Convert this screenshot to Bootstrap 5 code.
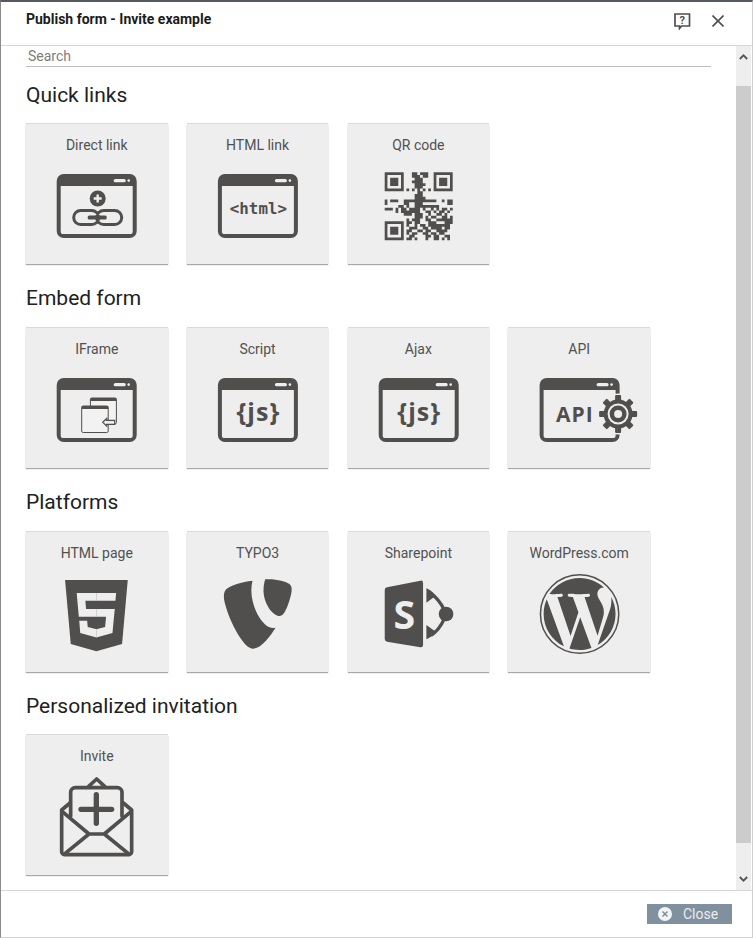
<!DOCTYPE html>
<html lang="en">
<head>
<meta charset="utf-8">
<title>Publish form</title>
<link href="https://cdn.jsdelivr.net/npm/bootstrap@5.3.0/dist/css/bootstrap.min.css" rel="stylesheet">
<style>
html,body{height:100%;margin:0;background:#fff}
body{font-family:Roboto,"Liberation Sans",sans-serif;color:#212529;overflow:hidden}
.pf-window{height:938px;width:753px;border-top:2px solid #555a60;border-left:1px solid #8a8a8a;border-right:1px solid #d0d0d0;border-bottom:1px solid #d0d0d0}
.pf-head{height:44px;border-bottom:1px solid #d6d6d6;padding:0 28px 0 25px}
.pf-title{font-size:14px;font-weight:700;line-height:20px;margin:7px 0 0;color:#1c1c1c}
.pf-tools{gap:21px;margin-top:-4px}
.pf-main{min-height:0}
.pf-scroll{padding:0 25px 0 25px;min-width:0;overflow:hidden}
.pf-search.form-control{border:0;border-bottom:1px solid #bdbdbd;border-radius:0;padding:1px 2px 0;height:21px;font-size:14px;line-height:18px;color:#777;margin-bottom:16px;box-shadow:none}
.pf-search::placeholder{color:#7d7d7d;opacity:1}
.pf-section{padding-bottom:21.87px}
.pf-h{font-size:21px;font-weight:400;line-height:24px;margin:0 0 17.8px;color:#212121}
.pf-grid{gap:19.3px}
.pf-tile.card{width:141.5px;height:140px;background:#eee;border:0;border-radius:0;box-shadow:0 1px 1px rgba(0,0,0,.33),0 -1px 0 #dadada,0 0 2px rgba(0,0,0,.06)}
.pf-label{font-size:14px;line-height:20px;height:39px;padding-top:11px;text-align:center;color:#515151}
.pf-tile svg{display:block}
.ic{fill:#514f4d}
.bgc{fill:#eee}
.pf-t{font-family:"Open Sans","DejaVu Sans",sans-serif;font-weight:700;fill:#514f4d;text-anchor:middle}
.pf-bar{width:15px;margin-right:1px;background:#eee;flex:none}
.pf-arrow{height:40px}
.pf-arrow2{height:47px}
.pf-thumb{background:#ccc;flex:1}
.pf-foot{height:47px;border-top:1px solid #d6d6d6;padding:13px 20px 0 0}
.pf-btn.btn{width:85px;height:20px;padding:0 0 0 11px;border:0;border-radius:0;background:#7f909e;color:#e9edf0;font-size:14px;line-height:20px;gap:11px}
.pf-btn svg{flex:none}
</style>
</head>
<body>
<div class="pf-window d-flex flex-column">
  <div class="pf-head d-flex justify-content-between flex-none">
    <h1 class="pf-title">Publish form - Invite example</h1>
    <div class="pf-tools d-flex align-items-center">
      <svg width="18" height="18" viewBox="0 0 18 18" aria-label="Help"><path d="M2 2h14.500v12H8.500l-2 2.500V14H2z" fill="none" stroke="#514f4d" stroke-width="1.700"/><text x="9.200" y="12" text-anchor="middle" font-family="Roboto,sans-serif" font-weight="700" font-size="11" fill="#514f4d">?</text></svg>
      <svg width="12" height="12" viewBox="0 0 12 12" aria-label="Close"><path d="M.5.5l11 11M11.500.5l-11 11" stroke="#514f4d" stroke-width="1.600" fill="none"/></svg>
    </div>
  </div>
  <div class="pf-main d-flex flex-grow-1">
    <div class="pf-scroll flex-grow-1">
      <input class="form-control pf-search" type="text" placeholder="Search">

      <section class="pf-section">
        <h2 class="pf-h">Quick links</h2>
        <div class="d-flex pf-grid">
          <div class="card pf-tile"><div class="pf-label">Direct link</div>
            <svg width="142" height="101" viewBox="0 40 142 101"><g transform="translate(.7 0)">
              <path class="ic" fill-rule="evenodd" d="M37 51h66a7 7 0 0 1 7 7v50a7 7 0 0 1-7 7H37a7 7 0 0 1-7-7V58a7 7 0 0 1 7-7zM34 63v46a2 2 0 0 0 2 2h68a2 2 0 0 0 2-2V63z"/>
              <rect class="bgc" x="87" y="56" width="12" height="3.300" rx="1.600"/><circle class="bgc" cx="102" cy="57.600" r="1.300"/>
              <circle class="ic" cx="71" cy="75.500" r="8"/><path d="M67 75.500h8M71 71.500v8" stroke="#eee" stroke-width="2.400"/>
              <path d="M65 87.500H54a7 7 0 0 0 0 14h11a7 7 0 0 0 0-14zM77 87.500h11a7 7 0 0 1 0 14H77a7 7 0 0 1 0-14z" fill="none" stroke="#514f4d" stroke-width="3"/>
              <rect class="ic" x="61" y="92.500" width="19" height="4" rx="1.500"/>
            </g></svg>
          </div>
          <div class="card pf-tile"><div class="pf-label">HTML link</div>
            <svg width="142" height="101" viewBox="0 40 142 101"><g transform="translate(.9 0)">
              <path class="ic" fill-rule="evenodd" d="M37 51h66a7 7 0 0 1 7 7v50a7 7 0 0 1-7 7H37a7 7 0 0 1-7-7V58a7 7 0 0 1 7-7zM34 63v46a2 2 0 0 0 2 2h68a2 2 0 0 0 2-2V63z"/>
              <rect class="bgc" x="87" y="56" width="12" height="3.300" rx="1.600"/><circle class="bgc" cx="102" cy="57.600" r="1.300"/>
              <text class="pf-t" x="70.500" y="90.500" font-size="15.800" style="font-family:'DejaVu Sans Mono',monospace">&lt;html&gt;</text>
            </g></svg>
          </div>
          <div class="card pf-tile"><div class="pf-label">QR code</div>
            <svg width="142" height="101" viewBox="0 40 142 101"><path id="qr" class="ic" transform="translate(36.700 49.300) scale(2.720)" d=""/></svg>
          </div>
        </div>
      </section>

      <section class="pf-section">
        <h2 class="pf-h">Embed form</h2>
        <div class="d-flex pf-grid">
          <div class="card pf-tile"><div class="pf-label">IFrame</div>
            <svg width="142" height="101" viewBox="0 40 142 101"><g transform="translate(.7 0)">
              <path class="ic" fill-rule="evenodd" d="M37 51h66a7 7 0 0 1 7 7v50a7 7 0 0 1-7 7H37a7 7 0 0 1-7-7V58a7 7 0 0 1 7-7zM34 63v46a2 2 0 0 0 2 2h68a2 2 0 0 0 2-2V63z"/>
              <rect class="bgc" x="87" y="56" width="12" height="3.300" rx="1.600"/><circle class="bgc" cx="102" cy="57.600" r="1.300"/>
              <rect x="63.700" y="71" width="26" height="26" rx="1.500" fill="#f2f2f2" stroke="#514f4d"/><rect class="ic" x="63.700" y="71" width="26" height="3"/>
              <rect x="55" y="79" width="26.500" height="26.500" rx="1.500" fill="#f2f2f2" stroke="#514f4d"/><rect class="ic" x="55" y="79" width="26.500" height="3"/>
              <path d="M76 95.300 80 91.500v1.800h8v4h-8v1.800z" fill="#eee" stroke="#514f4d" stroke-width="1.200"/>
            </g></svg>
          </div>
          <div class="card pf-tile"><div class="pf-label">Script</div>
            <svg width="142" height="101" viewBox="0 40 142 101"><g transform="translate(.9 0)">
              <path class="ic" fill-rule="evenodd" d="M37 51h66a7 7 0 0 1 7 7v50a7 7 0 0 1-7 7H37a7 7 0 0 1-7-7V58a7 7 0 0 1 7-7zM34 63v46a2 2 0 0 0 2 2h68a2 2 0 0 0 2-2V63z"/>
              <rect class="bgc" x="87" y="56" width="12" height="3.300" rx="1.600"/><circle class="bgc" cx="102" cy="57.600" r="1.300"/>
              <text class="pf-t" x="70.500" y="94" font-size="25" letter-spacing="1">{js}</text>
            </g></svg>
          </div>
          <div class="card pf-tile"><div class="pf-label">Ajax</div>
            <svg width="142" height="101" viewBox="0 40 142 101"><g transform="translate(.7 0)">
              <path class="ic" fill-rule="evenodd" d="M37 51h66a7 7 0 0 1 7 7v50a7 7 0 0 1-7 7H37a7 7 0 0 1-7-7V58a7 7 0 0 1 7-7zM34 63v46a2 2 0 0 0 2 2h68a2 2 0 0 0 2-2V63z"/>
              <rect class="bgc" x="87" y="56" width="12" height="3.300" rx="1.600"/><circle class="bgc" cx="102" cy="57.600" r="1.300"/>
              <text class="pf-t" x="70.500" y="94" font-size="25" letter-spacing="1">{js}</text>
            </g></svg>
          </div>
          <div class="card pf-tile"><div class="pf-label">API</div>
            <svg width="142" height="101" viewBox="0 40 142 101"><g transform="translate(1.600 0)">
              <path class="ic" fill-rule="evenodd" d="M37 51h66a7 7 0 0 1 7 7v50a7 7 0 0 1-7 7H37a7 7 0 0 1-7-7V58a7 7 0 0 1 7-7zM34 63v46a2 2 0 0 0 2 2h68a2 2 0 0 0 2-2V63z"/>
              <rect class="bgc" x="87" y="56" width="12" height="3.300" rx="1.600"/><circle class="bgc" cx="102" cy="57.600" r="1.300"/>
              <rect class="bgc" x="100" y="67" width="14" height="40"/>
              <circle class="bgc" cx="108.500" cy="87" r="20.500"/>
              <g transform="translate(108.500 87)">
                <g class="ic"><rect x="-3" y="-19" width="6" height="38" rx="1"/><rect x="-3" y="-19" width="6" height="38" rx="1" transform="rotate(45)"/><rect x="-3" y="-19" width="6" height="38" rx="1" transform="rotate(90)"/><rect x="-3" y="-19" width="6" height="38" rx="1" transform="rotate(135)"/><circle r="14.500"/></g>
                <circle r="10.500" fill="#eee"/><circle r="8.500" class="ic"/><circle r="4" fill="#eee"/>
              </g>
              <text class="pf-t" x="65.300" y="94.500" font-size="21" letter-spacing="1">API</text>
            </g></svg>
          </div>
        </div>
      </section>

      <section class="pf-section">
        <h2 class="pf-h">Platforms</h2>
        <div class="d-flex pf-grid">
          <div class="card pf-tile"><div class="pf-label">HTML page</div>
            <svg width="142" height="101" viewBox="0 40 142 101"><g transform="translate(34.900 49) scale(.139)">
              <path class="ic" d="M71 460 30 0h451l-41 460-185 52z"/>
              <path class="bgc" d="M256 208h-75l-5-58h80V94H114l1 15 14 156h127zM256 355l-63-17-4-45h-57l7 89 117 32z"/>
              <path class="bgc" d="M255 208v57h70l-7 73-63 17v59l116-32 15-159 2-15zM255 94v56h137l1-12 3-29 1-15z"/>
            </g></svg>
          </div>
          <div class="card pf-tile"><div class="pf-label">TYPO3</div>
            <svg width="142" height="101" viewBox="0 40 142 101"><g transform="translate(-166.800 -1) scale(.3333)">
              <path class="ic" d="M697 152C665 155 630 166 618 178 611 186 610 196 612 210 622 262 668 356 698 356 722 356 750 320 766 293 760 294 754 294 748 292 718 280 682 210 697 152z"/>
              <path class="ic" d="M735 148C768 146 796 154 808 162 815 168 815 176 814 186 808 216 794 258 779 258 756 258 730 218 730 182 730 168 732 158 735 148z"/>
            </g></svg>
          </div>
          <div class="card pf-tile"><div class="pf-label">Sharepoint</div>
            <svg width="142" height="101" viewBox="0 40 142 101"><g transform="translate(-7.600 -1) scale(.3333)">
              <path class="ic" d="M140 172 240 152a7 7 0 0 1 8 7V345a7 7 0 0 1-8 7L140 335a8 8 0 0 1-7-8V180a8 8 0 0 1 7-8z"/>
              <text x="192" y="298" text-anchor="middle" font-family="'Open Sans',sans-serif" font-weight="700" font-size="118" fill="#eee">S</text>
              <path class="ic" d="M258 175c14 6 24 15 26 24l-26 19zM258 285l26 19c-2 9-12 18-26 24z"/>
              <path d="M272 190c16 12 30 30 40 50M272 316c16-10 30-28 40-50" fill="none" stroke="#514f4d" stroke-width="10"/>
              <circle class="ic" cx="317" cy="252" r="22"/>
            </g></svg>
          </div>
          <div class="card pf-tile"><div class="pf-label">WordPress.com</div>
            <svg width="142" height="101" viewBox="0 40 142 101"><g transform="translate(31.600 43) scale(3.333)">
              <path class="ic" d="M21.469 6.825c.84 1.537 1.318 3.3 1.318 5.175 0 3.979-2.156 7.456-5.363 9.325l3.295-9.527c.615-1.54.82-2.771.82-3.864 0-.405-.026-.78-.07-1.11m-7.981.105c.647-.03 1.232-.105 1.232-.105.582-.075.514-.93-.067-.899 0 0-1.755.135-2.88.135-1.064 0-2.85-.15-2.85-.15-.585-.03-.661.855-.075.885 0 0 .54.061 1.125.09l1.68 4.605-2.37 7.08L5.354 6.9c.649-.03 1.234-.1 1.234-.1.585-.075.516-.93-.065-.896 0 0-1.746.138-2.874.138-.2 0-.438-.008-.69-.015C4.911 3.15 8.235 1.215 12 1.215c2.809 0 5.365 1.072 7.286 2.833-.046-.003-.091-.009-.141-.009-1.06 0-1.812.923-1.812 1.914 0 .89.513 1.643 1.06 2.531.411.72.89 1.643.89 2.977 0 .915-.354 1.994-.821 3.479l-1.075 3.585-3.9-11.61.001.014zM12 22.784c-1.059 0-2.081-.153-3.048-.437l3.237-9.406 3.315 9.087c.024.053.05.101.078.149-1.12.393-2.325.609-3.582.609M1.211 12c0-1.564.336-3.05.935-4.39L7.29 21.709C3.694 19.96 1.212 16.271 1.212 12"/>
              <circle cx="12" cy="12" r="11.750" fill="none" stroke="#514f4d" stroke-width=".45"/>
            </g></svg>
          </div>
        </div>
      </section>

      <section class="pf-section">
        <h2 class="pf-h">Personalized invitation</h2>
        <div class="d-flex pf-grid">
          <div class="card pf-tile"><div class="pf-label">Invite</div>
            <svg width="142" height="101" viewBox="0 40 142 101"><g transform="translate(-6 -5) scale(.3333)" fill="none" stroke="#514f4d" stroke-width="11" stroke-linejoin="round" stroke-linecap="round">
              <path d="M206 172 230 150 254 172"/>
              <path d="M152 262V190a14 14 0 0 1 14-14H292a14 14 0 0 1 14 14V262"/>
              <path d="M150 222 125 243V368a9 9 0 0 0 9 9H326a9 9 0 0 0 9-9V243L310 222"/>
              <path d="M127 248 207 315H253L333 248M207 315 132 376M253 315 328 376"/>
              <path d="M229 197V283M183 241H275" stroke-width="16"/>
            </g></svg>
          </div>
        </div>
      </section>
    </div>
    <div class="pf-bar d-flex flex-column">
      <div class="pf-arrow d-flex justify-content-center"><svg class="mt-2" width="9" height="6" viewBox="0 0 9 6"><path d="M.8 5 4.500 1.300 8.200 5" fill="none" stroke="#555" stroke-width="1.800"/></svg></div>
      <div class="pf-thumb"></div>
      <div class="pf-arrow2 d-flex justify-content-center align-items-end pb-2"><svg width="9" height="6" viewBox="0 0 9 6"><path d="M.8 1 4.500 4.700 8.200 1" fill="none" stroke="#555" stroke-width="1.800"/></svg></div>
    </div>
  </div>
  <div class="pf-foot d-flex justify-content-end">
    <button type="button" class="btn pf-btn d-flex align-items-center">
      <svg width="14" height="14" viewBox="0 0 14 14"><circle cx="7" cy="7" r="7" fill="#f2f4f5"/><path d="M4.500 4.500l5 5M9.500 4.500l-5 5" stroke="#7f909e" stroke-width="1.500"/></svg>
      Close
    </button>
  </div>
</div>
<script>
var rows=["1111111000110111001111111","1000001000111011001000001","1011101000011100001011101","1011101000111100001011101","1011101000011110001011101","1000001000011100001000001","1111111010101010101111111","0000000000001100000000000","0000000000011100000000000","0000000000011110000000000","1011100111111111111001011","1000000110011100000000011","0000011010011111111100000","1110101101111010010101101","0000101111111001101011010","0000000111011100100110100","0000000000011101011001101","0000000010111001100111111","1111111011011000111000111","1000001010010110111111110","1011101001110011011110110","1011101011001101100111100","1011101010110011011011000","1000001001100001101100110","1111111011010001001101010"];
var d="";rows.forEach(function(r,y){r.split("").forEach(function(c,x){if(c==="1")d+="M"+x+" "+y+"h1v1h-1z";});});
document.getElementById("qr").setAttribute("d",d);
</script>
<script src="https://cdn.jsdelivr.net/npm/bootstrap@5.3.0/dist/js/bootstrap.bundle.min.js"></script>
</body>
</html>
